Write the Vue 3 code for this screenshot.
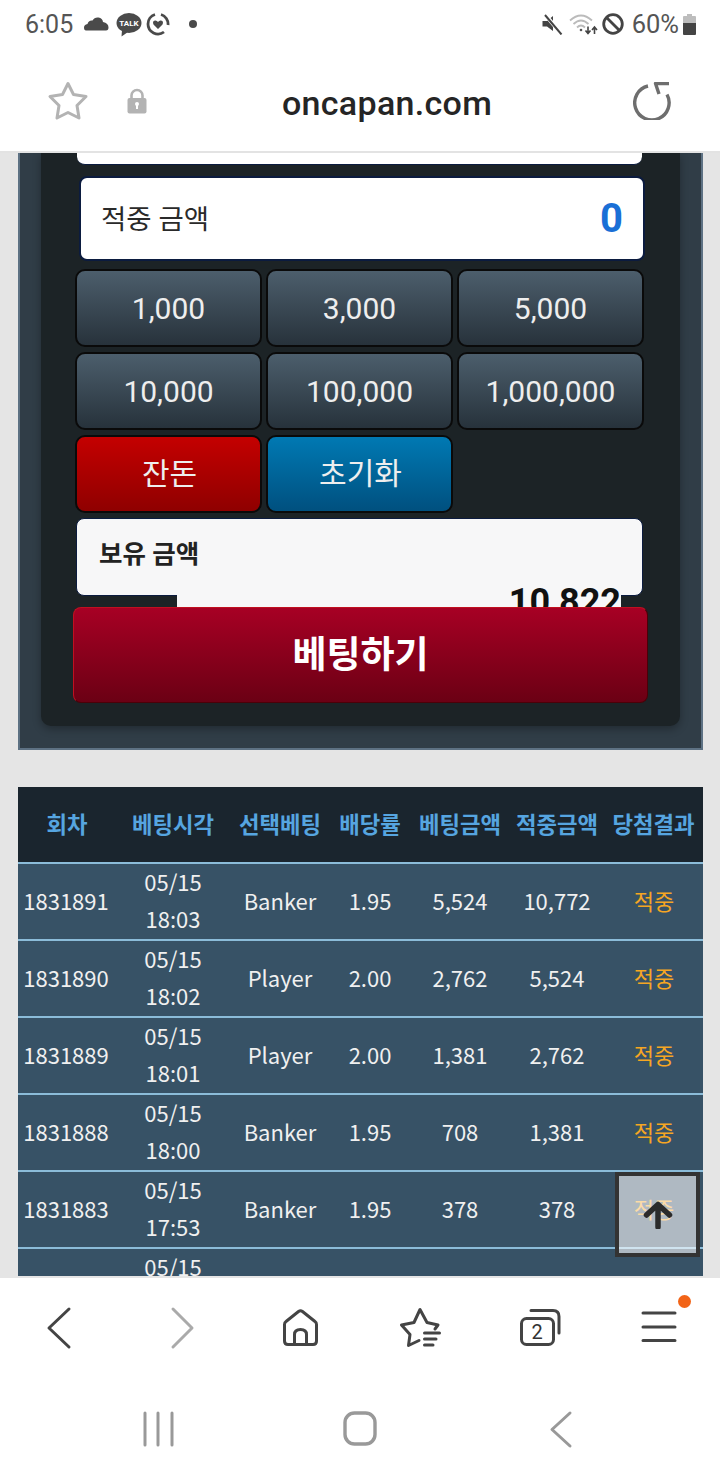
<script setup>
// 베팅 내역
const amounts = ['1,000', '3,000', '5,000', '10,000', '100,000', '1,000,000']
const columns = ['회차', '베팅시각', '선택베팅', '배당률', '베팅금액', '적중금액', '당첨결과']
const rows = [
  { round: '1831891', date: '05/15', time: '18:03', pick: 'Banker', rate: '1.95', bet: '5,524', win: '10,772', result: '적중' },
  { round: '1831890', date: '05/15', time: '18:02', pick: 'Player', rate: '2.00', bet: '2,762', win: '5,524', result: '적중' },
  { round: '1831889', date: '05/15', time: '18:01', pick: 'Player', rate: '2.00', bet: '1,381', win: '2,762', result: '적중' },
  { round: '1831888', date: '05/15', time: '18:00', pick: 'Banker', rate: '1.95', bet: '708', win: '1,381', result: '적중' },
  { round: '1831883', date: '05/15', time: '17:53', pick: 'Banker', rate: '1.95', bet: '378', win: '378', result: '적중' },
  { round: '', date: '05/15', time: '', pick: '', rate: '', bet: '', win: '', result: '' }
]
</script>

<template>
  <div class="phone">
    <header class="top">
      <div class="status">
        <span class="clock">6:05</span>
        <svg class="st-cloud" width="25" height="14" viewBox="0 0 25 14"><path d="M2 13.5Q0 13.5 0 10.5Q0 7.5 3.5 7Q4.5 3 8.5 3.5Q10.5 0 14.5 0.5Q18.5 1 19 5Q24.5 6 24.5 10.5Q24.5 13.5 22 13.5Z" fill="#4a4a4a" /></svg>
        <svg class="st-talk" width="26" height="24" viewBox="0 0 26 24">
          <ellipse cx="13" cy="10" rx="12.5" ry="10" fill="#4a4a4a" />
          <path d="M6 17L5.5 23.5L12 19Z" fill="#4a4a4a" />
          <text x="13" y="13" text-anchor="middle" font-size="8" font-weight="700" fill="#fff" font-family="Roboto, sans-serif">TALK</text>
        </svg>
        <svg class="st-heart" width="24" height="24" viewBox="0 0 24 24">
          <path d="M15 2.5A10 10 0 0 1 22 13M18 20A10 10 0 0 1 2 12A10 10 0 0 1 9 2.5" fill="none" stroke="#4a4a4a" stroke-width="2.8" />
          <path d="M12 17L7.5 12.5Q6 9 9 8.5Q11 8.3 12 10Q13 8.3 15 8.5Q18 9 16.5 12.5Z" fill="#4a4a4a" />
        </svg>
        <span class="st-dot"></span>
        <span class="spacer"></span>
        <svg class="st-mute" width="21" height="21" viewBox="0 0 21 21">
          <path d="M0.5 7H5L11 2V17L5 12.5H0.5Z" fill="#444" />
          <path d="M3 0.5L19.5 20" stroke="#fff" stroke-width="4" />
          <path d="M3 1L19.5 20.5" stroke="#444" stroke-width="2" />
        </svg>
        <svg class="st-wifi" width="29" height="22" viewBox="0 0 29 22" fill="none">
          <path d="M1 7.5Q12 -2.5 23 7.5" stroke="#bbb" stroke-width="1.8" />
          <path d="M4.5 11Q12 4 19.5 11" stroke="#bbb" stroke-width="1.8" />
          <path d="M8 14.5Q12 10.5 16 14.5" stroke="#bbb" stroke-width="1.8" />
          <circle cx="12" cy="17" r="1.3" fill="#555" />
          <path d="M19 13.5V20M16.5 17.5L19 20.5L21.5 17.5M25.5 21V14.5M23 17L25.5 14L28 17" stroke="#444" stroke-width="1.6" />
        </svg>
        <svg class="st-block" width="22" height="22" viewBox="0 0 22 22" fill="none">
          <circle cx="11" cy="11" r="9.3" stroke="#444" stroke-width="2.8" />
          <path d="M4.5 4.5L17.5 17.5" stroke="#444" stroke-width="2.8" />
        </svg>
        <span class="battery-text">60%</span>
        <svg class="st-batt" width="13" height="21" viewBox="0 0 13 21">
          <path d="M4 0H9V2H12Q13 2 13 3V9H0V3Q0 2 1 2H4Z" fill="#bdbdbd" />
          <path d="M0 9H13V20Q13 21 12 21H1Q0 21 0 20Z" fill="#444" />
        </svg>
      </div>
      <div class="address">
        <svg class="ad-star" width="42" height="40" viewBox="0 0 42 40">
          <path d="M21 2.5L26.5 13.5L39 15.5L30 24.5L32 37L21 31.5L10 37L12 24.5L3 15.5L15.5 13.5Z" fill="none" stroke="#b3b3b3" stroke-width="3" stroke-linejoin="round" />
        </svg>
        <svg class="ad-lock" width="20" height="26" viewBox="0 0 20 26">
          <path d="M4.5 11V7.5A5.5 5.5 0 0 1 15.5 7.5V11" fill="none" stroke="#b3b3b3" stroke-width="2.6" />
          <rect x="0.5" y="10" width="19" height="15.5" rx="2" fill="#b3b3b3" />
          <circle cx="10" cy="16" r="2" fill="#fff" />
          <rect x="9" y="16" width="2" height="5" fill="#fff" />
        </svg>
        <span class="url">oncapan.com</span>
        <svg class="ad-reload" width="38" height="38" viewBox="0 0 38 38" fill="none">
          <path d="M15 4A17.2 17.2 0 1 0 34 12.5" stroke="#6e6e6e" stroke-width="3.4" />
          <path d="M36 1.5H22.5L26 12" stroke="#6e6e6e" stroke-width="3.4" stroke-linejoin="round" />
        </svg>
      </div>
    </header>

    <main class="page">
      <section class="panel">
        <div class="inner">
          <div class="field-cut"></div>
          <div class="hit-field">
            <span>적중 금액</span>
            <strong>0</strong>
          </div>
          <div class="keys">
            <button v-for="a in amounts" :key="a" class="key">{{ a }}</button>
            <button class="key red">잔돈</button>
            <button class="key blue">초기화</button>
          </div>
          <div class="hold-field">
            <span>보유 금액</span>
            <div class="hold-value">10,822</div>
          </div>
          <button class="bet-btn">베팅하기</button>
        </div>
      </section>

      <table class="history">
        <colgroup>
          <col class="c1" /><col class="c2" /><col class="c3" /><col class="c4" /><col class="c5" /><col class="c6" /><col class="c7" />
        </colgroup>
        <thead>
          <tr><th v-for="c in columns" :key="c">{{ c }}</th></tr>
        </thead>
        <tbody>
          <tr v-for="(r, i) in rows" :key="i">
            <td class="round">{{ r.round }}</td>
            <td class="when"><span>{{ r.date }}</span><span>{{ r.time }}</span></td>
            <td>{{ r.pick }}</td>
            <td>{{ r.rate }}</td>
            <td>{{ r.bet }}</td>
            <td>{{ r.win }}</td>
            <td class="result">{{ r.result }}</td>
          </tr>
        </tbody>
      </table>

      <button class="to-top" aria-label="top">
        <svg width="30" height="28" viewBox="0 0 30 28" fill="none">
          <path d="M15 26V4M3.5 14L15 3.5L26.5 14" stroke="#2b2b2b" stroke-width="5.5" stroke-linecap="round" stroke-linejoin="round" />
        </svg>
      </button>
    </main>

    <footer class="bottom">
      <nav class="browser-nav">
        <div class="cell">
          <svg width="48" height="48" viewBox="0 0 48 48" fill="none"><path d="M33 5L13 24L33 43" stroke="#444" stroke-width="3" stroke-linecap="round" stroke-linejoin="round" /></svg>
        </div>
        <div class="cell">
          <svg width="48" height="48" viewBox="0 0 48 48" fill="none"><path d="M17 5L36 24L17 43" stroke="#aaa" stroke-width="3" stroke-linecap="round" stroke-linejoin="round" /></svg>
        </div>
        <div class="cell">
          <svg width="48" height="48" viewBox="0 0 48 48" fill="none" stroke="#444" stroke-width="3" stroke-linejoin="round">
            <path d="M8.5 20.5Q8.5 18.5 10 17.5L22.5 7.5Q24.5 6 26.5 7.5L39 17.5Q40.5 18.5 40.5 20.5V37Q40.5 40.5 37 40.5H12Q8.5 40.5 8.5 37Z" />
            <path d="M18.5 40V30.5Q18.5 25.5 24.5 25.5Q30.5 25.5 30.5 30.5V40" />
          </svg>
        </div>
        <div class="cell">
          <svg width="48" height="48" viewBox="0 0 48 48" fill="none" stroke="#444" stroke-width="3" stroke-linecap="round" stroke-linejoin="round">
            <path d="M39 25L42 21L31 18.5L24 5.5L18 18.5L5.5 21L14 30.5L12.5 41.5L23 36.5" />
            <path d="M28.5 29H43.5M28.5 35H40M28.5 41H37" />
          </svg>
        </div>
        <div class="cell">
          <svg width="48" height="48" viewBox="0 0 48 48" fill="none">
            <rect x="5.5" y="14.5" width="32" height="26" rx="5" stroke="#444" stroke-width="3" />
            <path d="M15 6.5H37Q43 6.5 43 12.5V29" stroke="#444" stroke-width="3" stroke-linecap="round" />
            <text x="21" y="35" text-anchor="middle" font-size="20" fill="#333" font-family="Roboto, sans-serif">2</text>
          </svg>
        </div>
        <div class="cell menu-cell">
          <svg width="48" height="48" viewBox="0 0 48 48" fill="none"><path d="M7 9H39M7 23H39M7 36.5H39" stroke="#444" stroke-width="3" stroke-linecap="round" /></svg>
          <span class="menu-dot"></span>
        </div>
      </nav>
      <nav class="system-nav">
        <svg width="48" height="48" viewBox="0 0 48 48" fill="none"><path d="M11 8V40M24 8V40M38 8V40" stroke="#999" stroke-width="3" stroke-linecap="round" /></svg>
        <svg width="48" height="48" viewBox="0 0 48 48" fill="none"><rect x="9" y="8" width="30" height="31" rx="9.5" stroke="#999" stroke-width="3.4" /></svg>
        <svg width="48" height="48" viewBox="0 0 48 48" fill="none"><path d="M33 8L15 24.5L33 41" stroke="#999" stroke-width="3" stroke-linecap="round" stroke-linejoin="round" /></svg>
      </nav>
    </footer>
  </div>
</template>

<style scoped>
.phone {
  width: 720px;
  height: 1480px;
  display: flex;
  flex-direction: column;
  overflow: hidden;
  background: #fff;
  font-family: Roboto, "Noto Sans CJK KR", sans-serif;
}

/* 상단 상태바 + 주소창 */
.top {
  flex: none;
  height: 153px;
  box-sizing: border-box;
  border-bottom: 2px solid #e3e3e3;
  background: #fff;
}

.status {
  height: 51px;
  box-sizing: border-box;
  display: flex;
  align-items: center;
  padding: 0 24px 3px 25px;
}

.clock {
  font-size: 25px;
  color: #555;
  width: 49px;
}

.st-cloud { margin-left: 10px; }
.st-talk { margin-left: 7px; margin-top: 2px; }
.st-heart { margin-left: 4px; }

.st-dot {
  width: 8px;
  height: 8px;
  margin-left: 19px;
  border-radius: 50%;
  background: #4a4a4a;
}

.spacer { flex: 1; }
.st-wifi { margin-left: 6px; }
.st-block { margin-left: 4px; }

.battery-text {
  margin-left: 8px;
  font-size: 25.5px;
  color: #555;
}

.st-batt { margin-left: 4px; }

.address {
  height: 100px;
  display: flex;
  align-items: center;
  position: relative;
  padding-left: 47px;
}

.ad-lock { margin-left: 38px; }

.url {
  margin-left: 135px;
  margin-top: 3px;
  font-size: 34px;
  font-weight: 500;
  color: #252525;
  letter-spacing: 0.3px;
  white-space: nowrap;
}

.ad-reload { margin-left: 141px; }

/* 스크롤 영역 */
.page {
  flex: 1;
  min-height: 0;
  overflow: hidden;
  position: relative;
  background: #e5e5e5;
}

.panel {
  width: 685px;
  height: 597px;
  box-sizing: border-box;
  margin-left: 18px;
  padding: 0 21px 24px 21px;
  background: #303d47;
  border-left: 2px solid #5d7183;
  border-right: 2px solid #5d7183;
  border-bottom: 2px solid #5d7183;
}

.inner {
  height: 573px;
  box-sizing: border-box;
  position: relative;
  padding: 0 37px 0 35px;
  background: #1c2326;
  border-radius: 0 0 10px 10px;
  box-shadow: 0 3px 8px rgba(0, 0, 0, 0.3);
}

.field-cut {
  height: 12px;
  margin: 0 1px;
  background: #fff;
  border-bottom: 1px solid #0b1b3f;
  border-radius: 0 0 8px 8px;
  box-sizing: border-box;
}

.hit-field {
  height: 85px;
  box-sizing: border-box;
  margin: 11px -2px 8px 3px;
  padding: 0 20px;
  display: flex;
  align-items: center;
  justify-content: space-between;
  background: #fff;
  border: 2px solid #0b1b3f;
  border-radius: 8px;
  font-size: 27.5px;
  color: #2a2a2a;
}

.hit-field span { margin-top: -3px; }

.hit-field strong {
  font-size: 40px;
  color: #1a6fd6;
}

.keys {
  display: grid;
  grid-template-columns: repeat(3, 187px);
  column-gap: 4px;
  row-gap: 5px;
  margin-left: -1px;
}

.key {
  height: 78px;
  padding: 0;
  border: 2px solid #0a0a0a;
  border-radius: 10px;
  background: linear-gradient(to bottom, #4c5e6c, #27323b);
  color: #eee;
  font-family: Roboto, "Noto Sans CJK KR", sans-serif;
  font-size: 30px;
}

.key.red {
  padding: 0 0 6px 2px;
  background: linear-gradient(to bottom, #c40000, #8f0000);
}

.key.blue {
  padding: 0 0 6px 2px;
  background: linear-gradient(to bottom, #0079b3, #00507f);
}

.hold-field {
  height: 78px;
  box-sizing: border-box;
  position: relative;
  margin-top: 5px;
  padding: 14px 22px 0;
  background: #f7f7f8;
  border: 1px solid #0b1b3f;
  border-radius: 8px;
  font-size: 25.5px;
  font-weight: 700;
  color: #222;
}

/* 칸보다 길어서 아래 버튼에 가려지는 입력값 */
.hold-value {
  position: absolute;
  left: 100px;
  right: 21px;
  top: 57px;
  height: 32px;
  overflow: hidden;
  background: #f7f7f8;
  text-align: right;
  font-size: 36px;
  line-height: 52px;
  color: #111;
}

.bet-btn {
  display: block;
  width: 575px;
  height: 96px;
  position: relative;
  margin: 11px 0 0 -3px;
  padding: 0 0 6px;
  background: linear-gradient(to bottom, #a70024, #6b0014);
  border: 1px solid #4b0008;
  border-top-color: #c01020;
  border-left-color: #c01020;
  border-radius: 8px;
  color: #fff;
  font-family: "Noto Sans CJK KR", sans-serif;
  font-size: 37px;
  font-weight: 700;
}

/* 베팅 내역 표 */
.history {
  width: 685px;
  margin: 37px 0 0 18px;
  border-collapse: separate;
  border-spacing: 0;
  table-layout: fixed;
  font-family: "Noto Sans CJK KR", sans-serif;
}

.c1 { width: 96px; }
.c2 { width: 116px; }
.c3 { width: 100px; }
.c4 { width: 80px; }
.c5 { width: 100px; }
.c6 { width: 94px; }
.c7 { width: 99px; }

.history th {
  height: 75px;
  box-sizing: border-box;
  padding: 0 0 4px;
  background: #1a252e;
  color: #56a5e0;
  font-size: 22.3px;
  font-weight: 700;
  white-space: nowrap;
}

.history th:first-child { padding-left: 2px; }
.history th:nth-child(2) { padding-left: 2px; }

.history td {
  height: 77px;
  box-sizing: border-box;
  padding: 0 0 4px;
  background: #375266;
  border-top: 2px solid #8bbcd9;
  color: #f0f0f0;
  font-size: 22px;
  text-align: center;
  white-space: nowrap;
}

.history .when { padding-left: 2px; }

.history .when span {
  display: block;
  min-height: 33px;
  line-height: 33px;
}

.history .when span + span { margin-top: 4px; }

.history .result {
  padding-left: 1px;
  color: #f5a623;
}

.to-top {
  position: absolute;
  left: 615px;
  top: 1019px;
  width: 85px;
  height: 85px;
  box-sizing: border-box;
  padding: 0;
  display: flex;
  align-items: center;
  justify-content: center;
  background: rgba(255, 255, 255, 0.6);
  border: 4px solid #333;
}

/* 하단 브라우저 메뉴 */
.bottom {
  flex: none;
  height: 204px;
  box-sizing: border-box;
  border-top: 2px solid #e5e5e5;
  background: #fff;
}

.browser-nav {
  height: 100px;
  display: grid;
  grid-template-columns: repeat(6, 120px);
}

.cell {
  position: relative;
  display: flex;
  align-items: center;
  justify-content: center;
}

.menu-dot {
  position: absolute;
  left: 78px;
  top: 17px;
  width: 13px;
  height: 13px;
  border-radius: 50%;
  background: #f26417;
}

.system-nav {
  height: 102px;
  display: flex;
  align-items: center;
  justify-content: space-between;
  padding: 0 135px 2px 134px;
}
</style>

<style>
html, body { margin: 0; background: #fff; }
</style>
